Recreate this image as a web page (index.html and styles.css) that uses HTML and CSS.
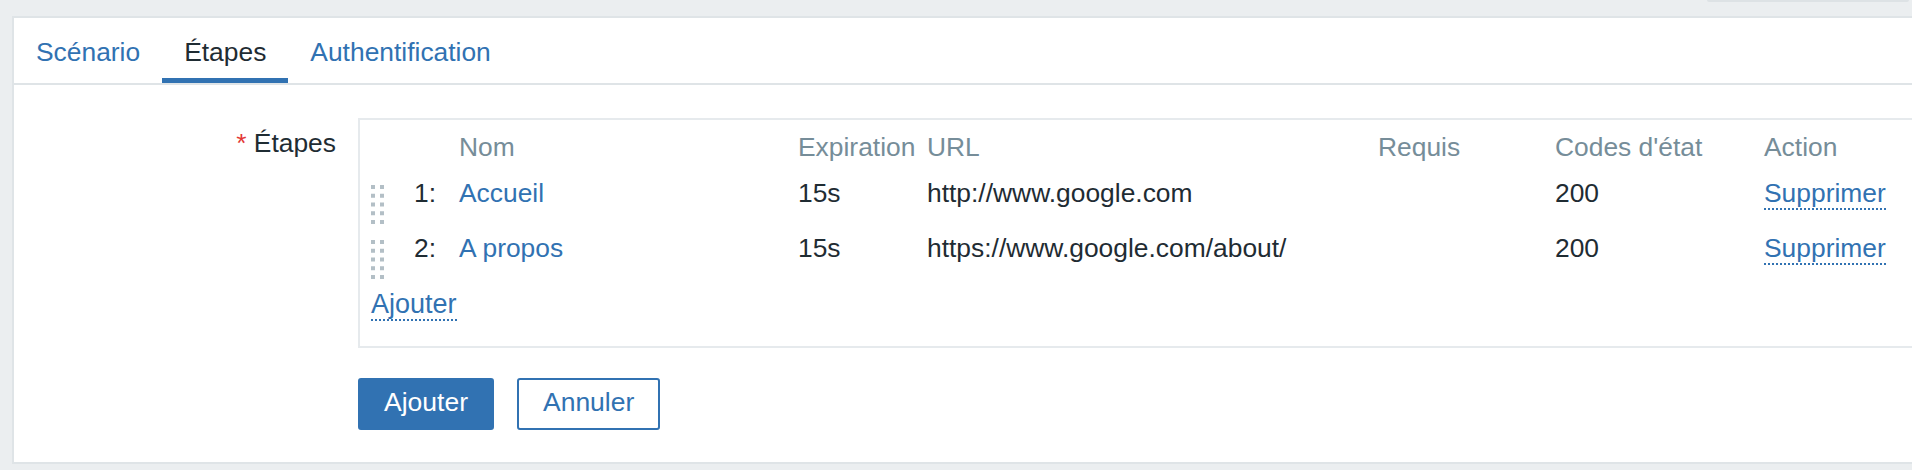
FILE: index.html
```html
<!DOCTYPE html>
<html lang="fr">
<head>
    <meta charset="UTF-8">
    <meta name="viewport" content="width=device-width, initial-scale=1.0">
    <title>Scénario web - Étapes</title>
    <link rel="stylesheet" href="styles.css">
</head>
<body>
    <div class="top-bar">
        <div class="search-edge"></div>
    </div>

    <div class="card">
        <ul class="tabs">
            <li><a href="#">Scénario</a></li>
            <li class="active"><a href="#">Étapes</a></li>
            <li><a href="#">Authentification</a></li>
        </ul>

        <form class="form">
            <label class="form-label"><span class="required">*</span> Étapes</label>

            <div class="steps-box">
                <table class="steps">
                    <thead>
                        <tr>
                            <th class="col-handle"></th>
                            <th class="col-num"></th>
                            <th class="col-name">Nom</th>
                            <th class="col-timeout">Expiration</th>
                            <th class="col-url">URL</th>
                            <th class="col-required">Requis</th>
                            <th class="col-status">Codes d'état</th>
                            <th class="col-action">Action</th>
                        </tr>
                    </thead>
                    <tbody>
                        <tr>
                            <td class="col-handle">
                                <svg class="drag" width="13" height="39" viewBox="0 0 13 39">
                                    <g fill="#b3bfc6">
                                        <rect x="0" y="0" width="4" height="4"/><rect x="9" y="0" width="4" height="4"/>
                                        <rect x="0" y="8.75" width="4" height="4"/><rect x="9" y="8.75" width="4" height="4"/>
                                        <rect x="0" y="17.5" width="4" height="4"/><rect x="9" y="17.5" width="4" height="4"/>
                                        <rect x="0" y="26.25" width="4" height="4"/><rect x="9" y="26.25" width="4" height="4"/>
                                        <rect x="0" y="35" width="4" height="4"/><rect x="9" y="35" width="4" height="4"/>
                                    </g>
                                </svg>
                            </td>
                            <td class="col-num">1:</td>
                            <td class="col-name"><a href="#">Accueil</a></td>
                            <td class="col-timeout">15s</td>
                            <td class="col-url">http://www.google.com</td>
                            <td class="col-required"></td>
                            <td class="col-status">200</td>
                            <td class="col-action"><a href="#" class="link-dotted">Supprimer</a></td>
                        </tr>
                        <tr>
                            <td class="col-handle">
                                <svg class="drag" width="13" height="39" viewBox="0 0 13 39">
                                    <g fill="#b3bfc6">
                                        <rect x="0" y="0" width="4" height="4"/><rect x="9" y="0" width="4" height="4"/>
                                        <rect x="0" y="8.75" width="4" height="4"/><rect x="9" y="8.75" width="4" height="4"/>
                                        <rect x="0" y="17.5" width="4" height="4"/><rect x="9" y="17.5" width="4" height="4"/>
                                        <rect x="0" y="26.25" width="4" height="4"/><rect x="9" y="26.25" width="4" height="4"/>
                                        <rect x="0" y="35" width="4" height="4"/><rect x="9" y="35" width="4" height="4"/>
                                    </g>
                                </svg>
                            </td>
                            <td class="col-num">2:</td>
                            <td class="col-name"><a href="#">A propos</a></td>
                            <td class="col-timeout">15s</td>
                            <td class="col-url">https://www.google.com/about/</td>
                            <td class="col-required"></td>
                            <td class="col-status">200</td>
                            <td class="col-action"><a href="#" class="link-dotted">Supprimer</a></td>
                        </tr>
                    </tbody>
                </table>

                <div class="steps-add">
                    <a href="#" class="link-dotted">Ajouter</a>
                </div>
            </div>

            <div class="form-actions">
                <button type="button" class="btn">Ajouter</button>
                <button type="button" class="btn btn-alt">Annuler</button>
            </div>
        </form>
    </div>
</body>
</html>
```

FILE: styles.css
```css
/* Page de base */
body {
    margin: 0;
    background-color: #ebeef0;
    color: #1f2c33;
    font-family: "Liberation Sans", Arial, sans-serif;
}

a {
    color: #3172b2;
    text-decoration: none;
}

.top-bar {
    height: 16px;
    display: flex;
    justify-content: flex-end;
}

.search-edge {
    width: 202px;
    height: 2px;
    margin-right: 3px;
    background-color: #dde2e5;
    border-radius: 0 0 4px 4px;
}

.card {
    margin-left: 12px;
    background-color: #fff;
    border: 2px solid #dfe4e7;
    border-right: none;
}

/* Onglets */
.tabs {
    list-style: none;
    margin: 0;
    padding: 0;
    display: flex;
    border-bottom: 2px solid #dfe4e7;
}

.tabs a {
    display: block;
    padding: 21px 22px 13px;
    font-size: 26.4px;
    line-height: 26px;
    border-bottom: 5px solid transparent;
}

.tabs .active a {
    color: #1f2c33;
    border-bottom-color: #3172b2;
}

/* Formulaire */
.form {
    display: grid;
    grid-template-columns: 322px 1fr;
    column-gap: 22px;
    row-gap: 30px;
    padding: 33px 0 32px;
    margin: 0;
}

.form-label {
    text-align: right;
    padding-top: 10px;
    font-size: 26.4px;
    line-height: 30px;
}

.required {
    color: #e33734;
}

.steps-box {
    border: 2px solid #e6eaed;
    border-right: none;
    padding: 14px 0 27px 11px;
}

/* Tableau des étapes */
.steps {
    width: 100%;
    border-collapse: collapse;
    table-layout: fixed;
}

.steps th {
    padding: 0;
    font-weight: normal;
    font-size: 26.4px;
    line-height: 26px;
    color: #768d99;
    text-align: left;
    vertical-align: baseline;
    white-space: nowrap;
}

.steps thead tr {
    height: 41px;
}

.steps tbody tr {
    height: 55px;
}

.steps td {
    padding: 3px 0 0;
    font-size: 26.4px;
    line-height: 30px;
    vertical-align: baseline;
    white-space: nowrap;
}

.col-handle { width: 29px; }
.col-num { width: 36px; padding-right: 23px !important; text-align: right; }
.col-name { width: 339px; }
.col-timeout { width: 129px; }
.col-url { width: 451px; }
.col-required { width: 177px; }
.col-status { width: 209px; }

.steps td.col-handle {
    vertical-align: top;
    padding-top: 10px;
}

.drag {
    display: block;
}

.link-dotted {
    border-bottom: 2px dotted #3172b2;
}

.steps-add {
    padding-top: 4px;
    font-size: 27px;
    line-height: 30px;
}

/* Boutons */
.form-actions {
    grid-column: 2;
    display: flex;
    gap: 23px;
}

.btn {
    height: 52px;
    padding: 0 24px 3px;
    font-family: inherit;
    font-size: 26.5px;
    line-height: 45px;
    color: #fff;
    background-color: #3172b2;
    border: 2px solid #3172b2;
    border-radius: 3px;
    cursor: pointer;
}

.btn-alt {
    color: #3172b2;
    background-color: #fff;
}
```
